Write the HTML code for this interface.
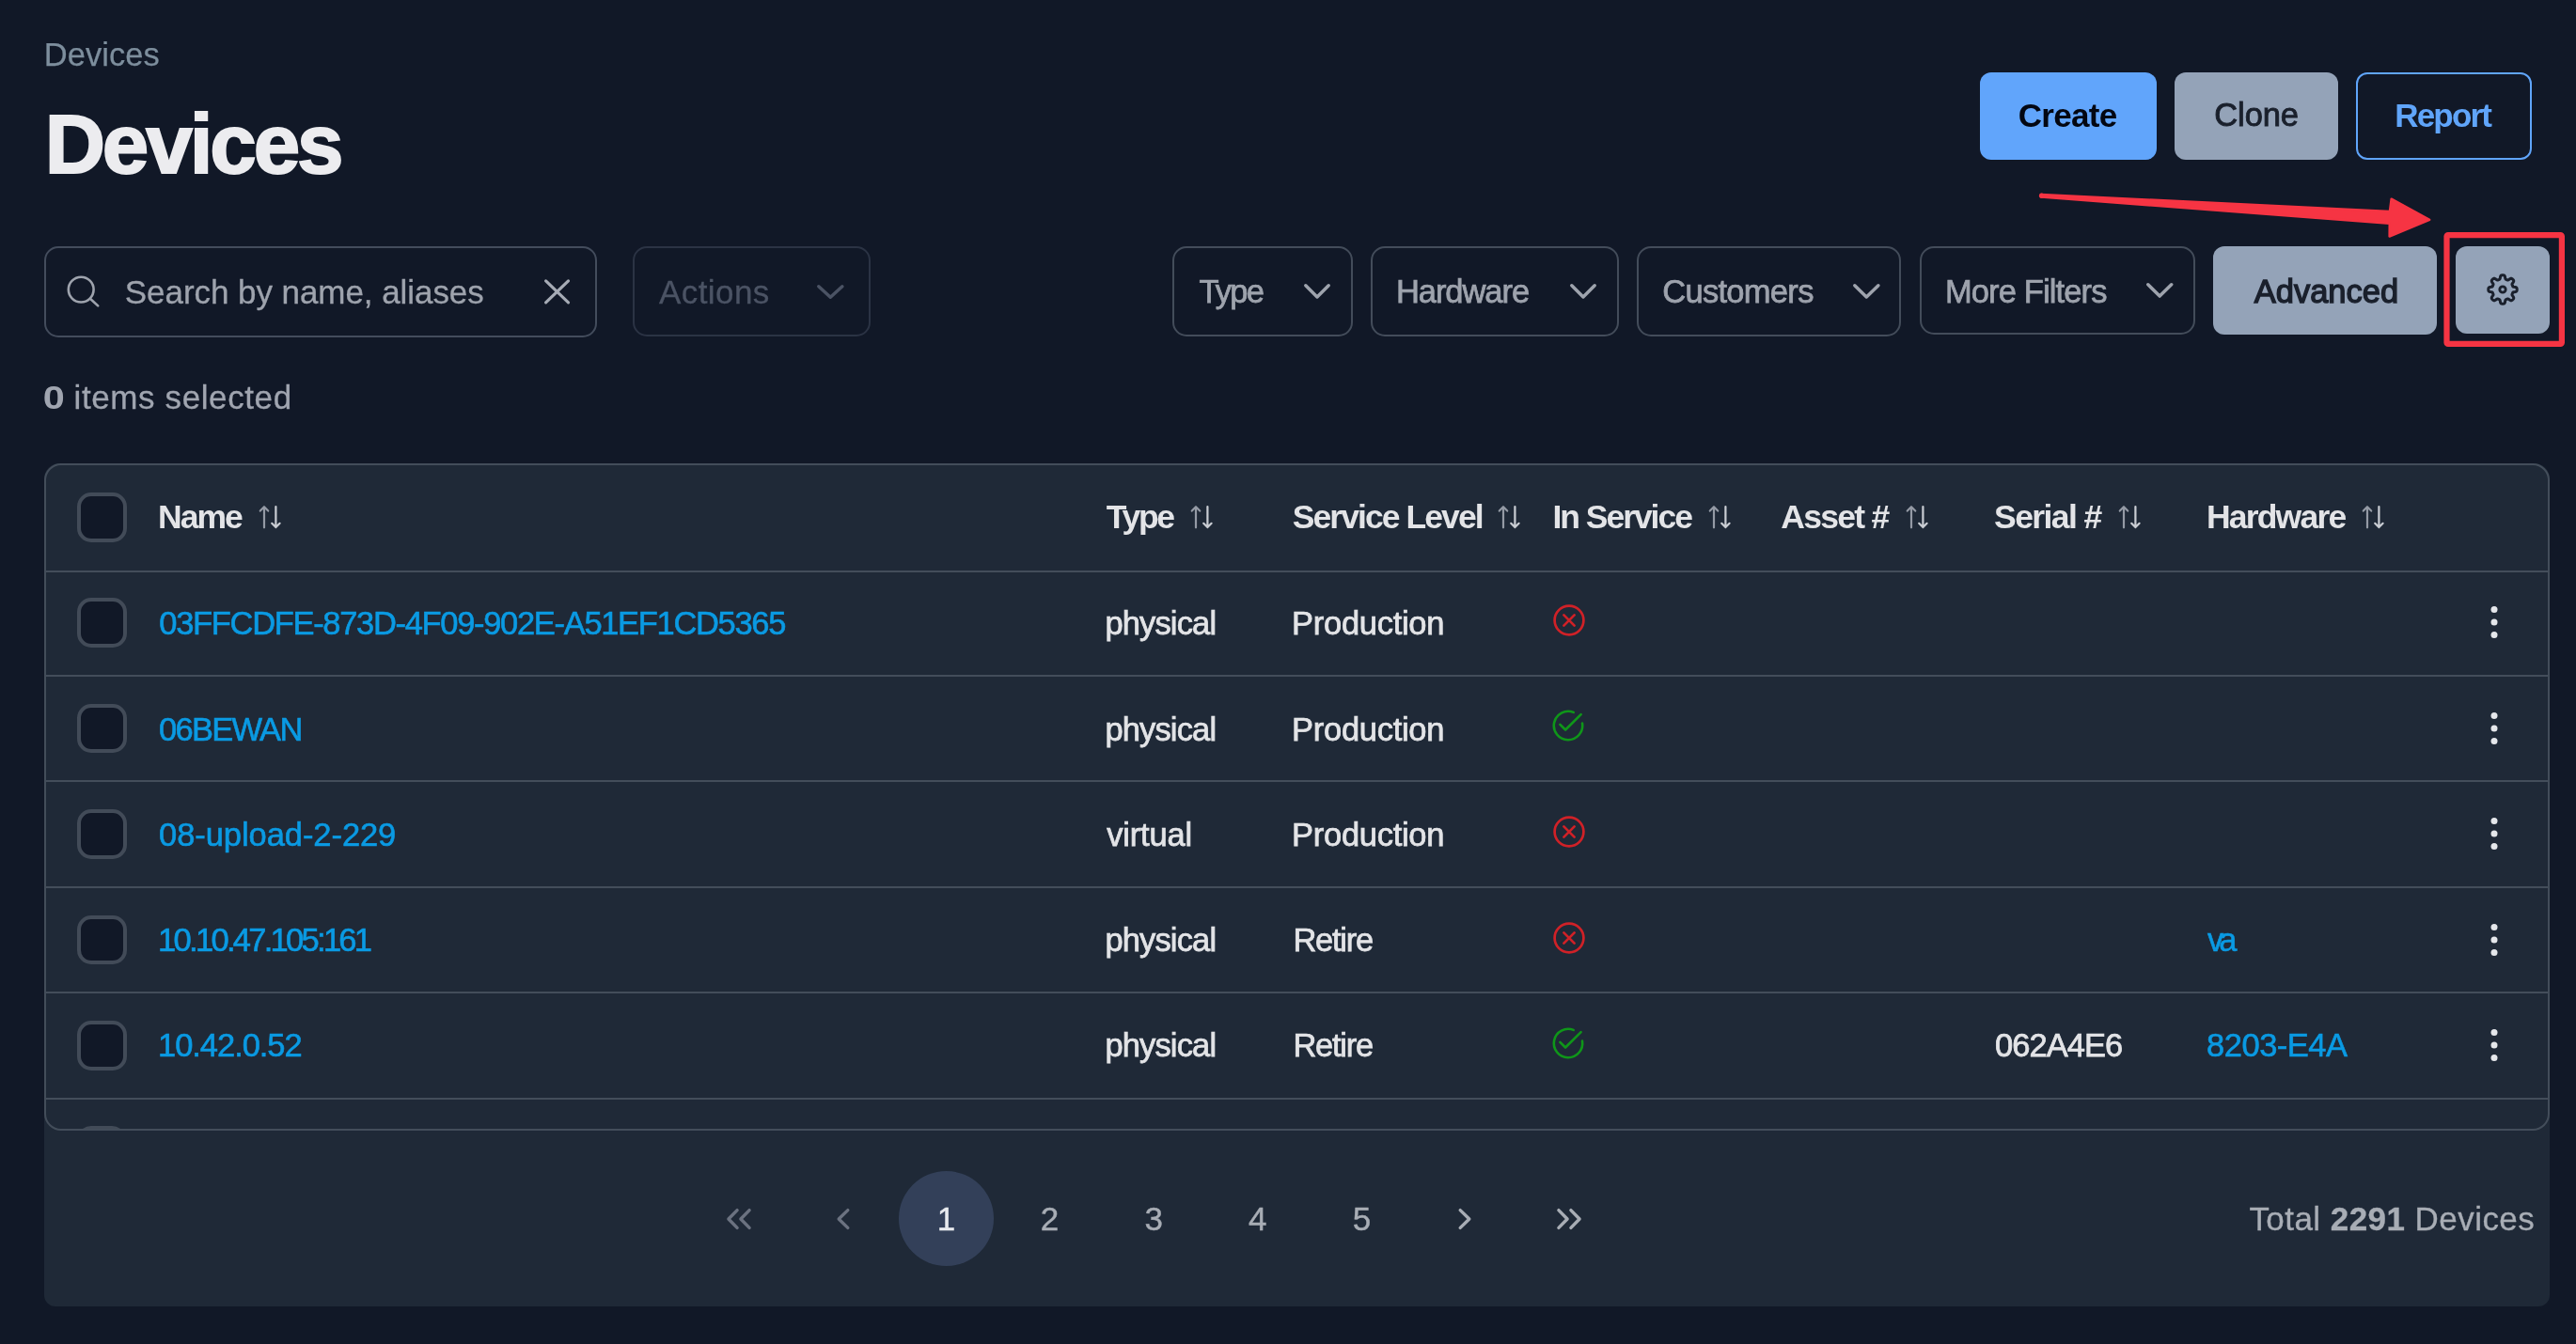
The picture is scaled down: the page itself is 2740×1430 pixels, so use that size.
<!DOCTYPE html>
<html lang="en"><head><meta charset="utf-8"><title>Devices</title>
<style>
html,body{margin:0;padding:0;}
body{width:2740px;height:1430px;overflow:hidden;background:#111827;position:relative;font-family:"Liberation Sans",Arial,Helvetica,sans-serif;}
.t{position:absolute;white-space:nowrap;line-height:1;margin:0;padding:0;font-weight:normal;}
.b{position:absolute;box-sizing:border-box;margin:0;padding:0;}
svg{overflow:visible;display:block;}
.dd{border:2.4px solid #434c5a;border-radius:15px;}
.btn{border-radius:12px;border:0;}
.sep{background:#434d5a;}
</style></head><body><div id="app" style="position:absolute;left:0;top:0;width:2740px;height:1430px;will-change:transform">

<header>
<nav aria-label="breadcrumb"><span class="t" style="left:46.7px;top:41.2px;font-size:34.5px;letter-spacing:0.07px;color:#7d8e9d;-webkit-text-stroke:0.25px;">Devices</span></nav>
<h1 class="t" style="left:47.7px;top:108.7px;font-size:89px;letter-spacing:-3.10px;color:#ececef;font-weight:bold;-webkit-text-stroke:2.0px;">Devices</h1>
<div class="b btn" style="left:2106.0px;top:77.0px;width:188.0px;height:93.0px;background:#61a5fb;"></div>
<span class="t" style="left:2146.8px;top:105.0px;font-size:35px;letter-spacing:-0.72px;color:#030712;font-weight:bold;">Create</span>
<div class="b btn" style="left:2313.0px;top:77.0px;width:174.0px;height:93.0px;background:#94a3b8;"></div>
<span class="t" style="left:2355.3px;top:105.4px;font-size:34.5px;letter-spacing:-0.11px;color:#1a202c;-webkit-text-stroke:0.9px;">Clone</span>
<div class="b btn" style="left:2506.0px;top:77.0px;width:187.0px;height:93.0px;border:2.4px solid #60a5fa;background:transparent;"></div>
<span class="t" style="left:2547.2px;top:105.0px;font-size:35px;letter-spacing:-1.80px;color:#60a5fa;font-weight:bold;">Report</span>
</header>
<svg class="b" style="left:0;top:0" width="2740" height="400" viewBox="0 0 2740 400"><path d="M2171 206.9 L2541.9 224.9 L2543.6 211.6 L2584.2 233.8 L2541.6 251.6 L2541.7 237.8 L2171 209.6 Z" fill="#f63443" stroke="#f63443" stroke-width="2.4" stroke-linejoin="round"/><circle cx="2171.6" cy="208.2" r="2.7" fill="#f63443"/><rect x="2602.5" y="250.1" width="122.4" height="115.8" rx="1.5" fill="none" stroke="#f63443" stroke-width="6.2" stroke-linejoin="round"/></svg>
<section aria-label="toolbar">
<div class="b dd" style="left:47.0px;top:261.8px;width:588.0px;height:96.9px;border-color:#434c5c;"></div>
<svg class="b" style="left:66px;top:288px" width="46" height="46" viewBox="66 288 46 46" fill="none" stroke="#9ea3ad" stroke-width="2.6" stroke-linecap="round"><circle cx="86.2" cy="308.1" r="13.4"/><path d="M95.9 317.7 L104.2 325.4"/></svg>
<span class="t" style="left:132.8px;top:293.4px;font-size:35px;letter-spacing:-0.06px;color:#9ea3ad;-webkit-text-stroke:0.3px;">Search by name, aliases</span>
<svg class="b" style="left:575px;top:293px" width="36" height="36" viewBox="575 293 36 36" fill="none" stroke="#a6abb5" stroke-width="3.2" stroke-linecap="round"><path d="M580.6 298.9 L604.5 321.8 M604.5 298.9 L580.6 321.8"/></svg>
<div class="b dd" style="left:673.2px;top:261.8px;width:252.5px;height:96.0px;border-color:#2b3344;"></div>
<span class="t" style="left:700.9px;top:292.6px;font-size:35px;letter-spacing:0.45px;color:#4b5364;-webkit-text-stroke:0.3px;">Actions</span>
<svg class="b" style="left:866.2px;top:299.5px" width="34.7" height="21.0" viewBox="-3 -3 34.7 21.0"><path d="M1.8 1.8 L14.3 13.2 L26.9 1.8" fill="none" stroke="#4b5364" stroke-width="3.5" stroke-linecap="round" stroke-linejoin="round"/></svg>
<div class="b dd" style="left:1247.2px;top:261.7px;width:191.4px;height:96.4px;"></div>
<span class="t" style="left:1275.5px;top:292.8px;font-size:34.5px;letter-spacing:-1.82px;color:#9ea3ad;-webkit-text-stroke:0.75px;">Type</span>
<svg class="b" style="left:1383.9px;top:299.0px" width="34.0" height="21.7" viewBox="-3 -3 34.0 21.7"><path d="M1.8 1.8 L14.0 13.9 L26.2 1.8" fill="none" stroke="#9ea3ad" stroke-width="3.5" stroke-linecap="round" stroke-linejoin="round"/></svg>
<div class="b dd" style="left:1458.2px;top:261.7px;width:263.8px;height:96.4px;"></div>
<span class="t" style="left:1484.9px;top:292.8px;font-size:34.5px;letter-spacing:-1.05px;color:#9ea3ad;-webkit-text-stroke:0.75px;">Hardware</span>
<svg class="b" style="left:1667.0px;top:299.0px" width="33.9" height="21.7" viewBox="-3 -3 33.9 21.7"><path d="M1.8 1.8 L14.0 13.9 L26.2 1.8" fill="none" stroke="#9ea3ad" stroke-width="3.5" stroke-linecap="round" stroke-linejoin="round"/></svg>
<div class="b dd" style="left:1741.2px;top:261.7px;width:281.3px;height:96.4px;"></div>
<span class="t" style="left:1768.2px;top:292.8px;font-size:34.5px;letter-spacing:-0.70px;color:#9ea3ad;-webkit-text-stroke:0.75px;">Customers</span>
<svg class="b" style="left:1967.6px;top:299.0px" width="34.6" height="21.7" viewBox="-3 -3 34.6 21.7"><path d="M1.8 1.8 L14.3 13.9 L26.9 1.8" fill="none" stroke="#9ea3ad" stroke-width="3.5" stroke-linecap="round" stroke-linejoin="round"/></svg>
<div class="b dd" style="left:2042.2px;top:261.7px;width:292.8px;height:94.5px;"></div>
<span class="t" style="left:2068.9px;top:292.8px;font-size:34.5px;letter-spacing:-0.87px;color:#9ea3ad;-webkit-text-stroke:0.75px;">More Filters</span>
<svg class="b" style="left:2279.6px;top:298.3px" width="34.4" height="21.8" viewBox="-3 -3 34.4 21.8"><path d="M1.8 1.8 L14.2 14.1 L26.7 1.8" fill="none" stroke="#9ea3ad" stroke-width="3.5" stroke-linecap="round" stroke-linejoin="round"/></svg>
<div class="b btn" style="left:2353.8px;top:261.8px;width:238.5px;height:93.8px;background:#94a3b8;"></div>
<span class="t" style="left:2397.7px;top:292.8px;font-size:34.5px;letter-spacing:0.01px;color:#1a202c;-webkit-text-stroke:1.4px;">Advanced</span>
<div class="b btn" style="left:2611.7px;top:261.8px;width:100.4px;height:93.4px;background:#94a3b8;"></div>
<svg class="b" style="left:2642.0px;top:288.3px" width="40" height="40" viewBox="-20 -20 40 40" fill="none" stroke="#1a202c" stroke-width="3" stroke-linejoin="round"><path d="M0.00 -15.20 L0.40 -15.19 L0.79 -15.16 L1.19 -15.09 L1.57 -14.96 L1.94 -14.71 L2.25 -14.23 L2.49 -13.43 L2.65 -12.46 L2.80 -11.66 L2.99 -11.17 L3.23 -10.89 L3.48 -10.71 L3.75 -10.58 L4.02 -10.46 L4.29 -10.35 L4.56 -10.24 L4.83 -10.13 L5.11 -10.04 L5.42 -9.98 L5.78 -10.01 L6.26 -10.22 L6.94 -10.68 L7.74 -11.26 L8.47 -11.66 L9.03 -11.77 L9.47 -11.69 L9.83 -11.51 L10.16 -11.28 L10.46 -11.02 L10.75 -10.75 L11.02 -10.46 L11.28 -10.16 L11.51 -9.83 L11.69 -9.47 L11.77 -9.03 L11.66 -8.47 L11.26 -7.74 L10.68 -6.94 L10.22 -6.26 L10.01 -5.78 L9.98 -5.42 L10.04 -5.11 L10.13 -4.83 L10.24 -4.56 L10.35 -4.29 L10.46 -4.02 L10.58 -3.75 L10.71 -3.48 L10.89 -3.23 L11.17 -2.99 L11.66 -2.80 L12.46 -2.65 L13.43 -2.49 L14.23 -2.25 L14.71 -1.94 L14.96 -1.57 L15.09 -1.19 L15.16 -0.79 L15.19 -0.40 L15.20 -0.00 L15.19 0.40 L15.16 0.79 L15.09 1.19 L14.96 1.57 L14.71 1.94 L14.23 2.25 L13.43 2.49 L12.46 2.65 L11.66 2.80 L11.17 2.99 L10.89 3.23 L10.71 3.48 L10.58 3.75 L10.46 4.02 L10.35 4.29 L10.24 4.56 L10.13 4.83 L10.04 5.11 L9.98 5.42 L10.01 5.78 L10.22 6.26 L10.68 6.94 L11.26 7.74 L11.66 8.47 L11.77 9.03 L11.69 9.47 L11.51 9.83 L11.28 10.16 L11.02 10.46 L10.75 10.75 L10.46 11.02 L10.16 11.28 L9.83 11.51 L9.47 11.69 L9.03 11.77 L8.47 11.66 L7.74 11.26 L6.94 10.68 L6.26 10.22 L5.78 10.01 L5.42 9.98 L5.11 10.04 L4.83 10.13 L4.56 10.24 L4.29 10.35 L4.02 10.46 L3.75 10.58 L3.48 10.71 L3.23 10.89 L2.99 11.17 L2.80 11.66 L2.65 12.46 L2.49 13.43 L2.25 14.23 L1.94 14.71 L1.57 14.96 L1.19 15.09 L0.79 15.16 L0.40 15.19 L0.00 15.20 L-0.40 15.19 L-0.79 15.16 L-1.19 15.09 L-1.57 14.96 L-1.94 14.71 L-2.25 14.23 L-2.49 13.43 L-2.65 12.46 L-2.80 11.66 L-2.99 11.17 L-3.23 10.89 L-3.48 10.71 L-3.75 10.58 L-4.02 10.46 L-4.29 10.35 L-4.56 10.24 L-4.83 10.13 L-5.11 10.04 L-5.42 9.98 L-5.78 10.01 L-6.26 10.22 L-6.94 10.68 L-7.74 11.26 L-8.47 11.66 L-9.03 11.77 L-9.47 11.69 L-9.83 11.51 L-10.16 11.28 L-10.46 11.02 L-10.75 10.75 L-11.02 10.46 L-11.28 10.16 L-11.51 9.83 L-11.69 9.47 L-11.77 9.03 L-11.66 8.47 L-11.26 7.74 L-10.68 6.94 L-10.22 6.26 L-10.01 5.78 L-9.98 5.42 L-10.04 5.11 L-10.13 4.83 L-10.24 4.56 L-10.35 4.29 L-10.46 4.02 L-10.58 3.75 L-10.71 3.48 L-10.89 3.23 L-11.17 2.99 L-11.66 2.80 L-12.46 2.65 L-13.43 2.49 L-14.23 2.25 L-14.71 1.94 L-14.96 1.57 L-15.09 1.19 L-15.16 0.79 L-15.19 0.40 L-15.20 0.00 L-15.19 -0.40 L-15.16 -0.79 L-15.09 -1.19 L-14.96 -1.57 L-14.71 -1.94 L-14.23 -2.25 L-13.43 -2.49 L-12.46 -2.65 L-11.66 -2.80 L-11.17 -2.99 L-10.89 -3.23 L-10.71 -3.48 L-10.58 -3.75 L-10.46 -4.02 L-10.35 -4.29 L-10.24 -4.56 L-10.13 -4.83 L-10.04 -5.11 L-9.98 -5.42 L-10.01 -5.78 L-10.22 -6.26 L-10.68 -6.94 L-11.26 -7.74 L-11.66 -8.47 L-11.77 -9.03 L-11.69 -9.47 L-11.51 -9.83 L-11.28 -10.16 L-11.02 -10.46 L-10.75 -10.75 L-10.46 -11.02 L-10.16 -11.28 L-9.83 -11.51 L-9.47 -11.69 L-9.03 -11.77 L-8.47 -11.66 L-7.74 -11.26 L-6.94 -10.68 L-6.26 -10.22 L-5.78 -10.01 L-5.42 -9.98 L-5.11 -10.04 L-4.83 -10.13 L-4.56 -10.24 L-4.29 -10.35 L-4.02 -10.46 L-3.75 -10.58 L-3.48 -10.71 L-3.23 -10.89 L-2.99 -11.17 L-2.80 -11.66 L-2.65 -12.46 L-2.49 -13.43 L-2.25 -14.23 L-1.94 -14.71 L-1.57 -14.96 L-1.19 -15.09 L-0.79 -15.16 L-0.40 -15.19 L-0.00 -15.20 Z"/><circle r="3.2" stroke-width="2.8"/></svg>
</section>
<p style="margin:0"><b class="t" style="left:46.4px;top:404.7px;font-size:35px;letter-spacing:0.00px;color:#a0a5b0;font-weight:bold;transform:scaleX(1.183);transform-origin:1.0px 50%;">0</b><span class="t" style="left:78.6px;top:404.7px;font-size:35px;letter-spacing:0.60px;color:#a0a5b0;-webkit-text-stroke:0.3px;">items selected</span></p>
<main>
<div class="b" style="left:47.0px;top:493.0px;width:2665.0px;height:896.5px;background:#1f2937;border-radius:16px 16px 12px 12px;"></div>
<div class="b" style="left:47.0px;top:493.2px;width:2665.0px;height:709.8px;border:2px solid #434d5a;border-radius:18px;overflow:hidden;"><div class="b cb" style="left:32.8px;top:702.4px;width:52.7px;height:52.8px;border:4px solid #424b58;border-radius:15px;background:#111827"></div></div>
<div class="b cb" style="left:82.2px;top:524.1px;width:52.7px;height:52.8px;box-sizing:border-box;border:4px solid #424b58;border-radius:15px;background:#111827;"></div>
<span class="t th" style="left:168.0px;top:532.7px;font-size:35.5px;letter-spacing:-1.98px;color:#e3e4e7;font-weight:bold;">Name</span>
<svg class="b" style="left:273.6px;top:536px" width="28" height="29" viewBox="273.6 536 28 29" fill="none" stroke-width="2.2" stroke-linecap="round" stroke-linejoin="round"><path d="M280.6 561.3 V539.3 M276.4 543.6 L280.6 539.3 L284.8 543.6" stroke="#949aa5"/><path d="M293.0 539.1 V561.1 M288.8 556.8 L293.0 561.1 L297.2 556.8" stroke="#c9cdd3"/></svg>
<span class="t th" style="left:1176.8px;top:532.7px;font-size:35.5px;letter-spacing:-2.33px;color:#e3e4e7;font-weight:bold;">Type</span>
<svg class="b" style="left:1264.9px;top:536px" width="28" height="29" viewBox="1264.9 536 28 29" fill="none" stroke-width="2.2" stroke-linecap="round" stroke-linejoin="round"><path d="M1271.9 561.3 V539.3 M1267.7 543.6 L1271.9 539.3 L1276.1 543.6" stroke="#949aa5"/><path d="M1284.3 539.1 V561.1 M1280.1 556.8 L1284.3 561.1 L1288.5 556.8" stroke="#c9cdd3"/></svg>
<span class="t th" style="left:1374.7px;top:532.7px;font-size:35.5px;letter-spacing:-1.92px;color:#e3e4e7;font-weight:bold;">Service Level</span>
<svg class="b" style="left:1592.4px;top:536px" width="28" height="29" viewBox="1592.4 536 28 29" fill="none" stroke-width="2.2" stroke-linecap="round" stroke-linejoin="round"><path d="M1599.4 561.3 V539.3 M1595.2 543.6 L1599.4 539.3 L1603.6 543.6" stroke="#949aa5"/><path d="M1611.8 539.1 V561.1 M1607.6 556.8 L1611.8 561.1 L1616.0 556.8" stroke="#c9cdd3"/></svg>
<span class="t th" style="left:1651.5px;top:532.7px;font-size:35.5px;letter-spacing:-2.04px;color:#e3e4e7;font-weight:bold;">In Service</span>
<svg class="b" style="left:1815.7px;top:536px" width="28" height="29" viewBox="1815.7 536 28 29" fill="none" stroke-width="2.2" stroke-linecap="round" stroke-linejoin="round"><path d="M1822.7 561.3 V539.3 M1818.5 543.6 L1822.7 539.3 L1826.9 543.6" stroke="#949aa5"/><path d="M1835.1 539.1 V561.1 M1830.9 556.8 L1835.1 561.1 L1839.3 556.8" stroke="#c9cdd3"/></svg>
<span class="t th" style="left:1894.3px;top:532.7px;font-size:35.5px;letter-spacing:-1.74px;color:#e3e4e7;font-weight:bold;">Asset #</span>
<svg class="b" style="left:2026.0px;top:536px" width="28" height="29" viewBox="2026.0 536 28 29" fill="none" stroke-width="2.2" stroke-linecap="round" stroke-linejoin="round"><path d="M2033.0 561.3 V539.3 M2028.8 543.6 L2033.0 539.3 L2037.2 543.6" stroke="#949aa5"/><path d="M2045.4 539.1 V561.1 M2041.2 556.8 L2045.4 561.1 L2049.6 556.8" stroke="#c9cdd3"/></svg>
<span class="t th" style="left:2121.1px;top:532.7px;font-size:35.5px;letter-spacing:-1.61px;color:#e3e4e7;font-weight:bold;">Serial #</span>
<svg class="b" style="left:2252.0px;top:536px" width="28" height="29" viewBox="2252.0 536 28 29" fill="none" stroke-width="2.2" stroke-linecap="round" stroke-linejoin="round"><path d="M2259.0 561.3 V539.3 M2254.8 543.6 L2259.0 539.3 L2263.2 543.6" stroke="#949aa5"/><path d="M2271.4 539.1 V561.1 M2267.2 556.8 L2271.4 561.1 L2275.6 556.8" stroke="#c9cdd3"/></svg>
<span class="t th" style="left:2346.9px;top:532.7px;font-size:35.5px;letter-spacing:-1.79px;color:#e3e4e7;font-weight:bold;">Hardware</span>
<svg class="b" style="left:2511.0px;top:536px" width="28" height="29" viewBox="2511.0 536 28 29" fill="none" stroke-width="2.2" stroke-linecap="round" stroke-linejoin="round"><path d="M2518.0 561.3 V539.3 M2513.8 543.6 L2518.0 539.3 L2522.2 543.6" stroke="#949aa5"/><path d="M2530.4 539.1 V561.1 M2526.2 556.8 L2530.4 561.1 L2534.6 556.8" stroke="#c9cdd3"/></svg>
<div class="b sep" style="left:49.0px;top:607.0px;width:2661.0px;height:2.0px;"></div>
<div class="b sep" style="left:49.0px;top:718.0px;width:2661.0px;height:2.0px;"></div>
<div class="b sep" style="left:49.0px;top:830.0px;width:2661.0px;height:2.0px;"></div>
<div class="b sep" style="left:49.0px;top:943.0px;width:2661.0px;height:2.0px;"></div>
<div class="b sep" style="left:49.0px;top:1055.0px;width:2661.0px;height:2.0px;"></div>
<div class="b sep" style="left:49.0px;top:1168.0px;width:2661.0px;height:2.0px;"></div>
<div class="b cb" style="left:82.2px;top:636.1px;width:52.7px;height:52.8px;box-sizing:border-box;border:4px solid #424b58;border-radius:15px;background:#111827;"></div>
<a class="t" style="left:169.3px;top:646.4px;font-size:34.5px;letter-spacing:-1.32px;color:#0a9ae3;-webkit-text-stroke:0.6px;">03FFCDFE-873D-4F09-902E-A51EF1CD5365</a>
<span class="t" style="left:1175.4px;top:646.4px;font-size:34.5px;letter-spacing:-0.85px;color:#e3e4e7;-webkit-text-stroke:0.75px;">physical</span>
<span class="t" style="left:1374.1px;top:646.4px;font-size:34.5px;letter-spacing:-0.29px;color:#e3e4e7;-webkit-text-stroke:0.75px;">Production</span>
<svg class="b" style="left:1648.6px;top:640.1px" width="40" height="40" viewBox="-20 -20 40 40" fill="none" stroke="#d02127" stroke-width="2.7" stroke-linecap="round"><circle r="15.4"/><path d="M-5.6 -5.6 L5.6 5.6 M5.6 -5.6 L-5.6 5.6"/></svg>
<svg class="b" style="left:2646.5px;top:642.1px" width="12" height="40" viewBox="-6 -20 12 40" fill="#e5e7eb"><circle cy="-13.5" r="3.5"/><circle cy="0" r="3.5"/><circle cy="13.5" r="3.5"/></svg>
<div class="b cb" style="left:82.2px;top:748.6px;width:52.7px;height:52.8px;box-sizing:border-box;border:4px solid #424b58;border-radius:15px;background:#111827;"></div>
<a class="t" style="left:169.1px;top:758.5px;font-size:34.5px;letter-spacing:-1.73px;color:#0a9ae3;-webkit-text-stroke:0.6px;">06BEWAN</a>
<span class="t" style="left:1175.4px;top:758.5px;font-size:34.5px;letter-spacing:-0.85px;color:#e3e4e7;-webkit-text-stroke:0.75px;">physical</span>
<span class="t" style="left:1374.1px;top:758.5px;font-size:34.5px;letter-spacing:-0.29px;color:#e3e4e7;-webkit-text-stroke:0.75px;">Production</span>
<svg class="b" style="left:1648.3px;top:752.0px" width="40" height="40" viewBox="-20 -20 40 40" fill="none" stroke="#0f9619" stroke-width="2.6" stroke-linecap="round" stroke-linejoin="round"><path d="M5.69 -14.09 A15.2 15.2 0 1 0 15.01 -2.38"/><path d="M-8.6 -1.2 L-2.9 4.5 L13.6 -11.8"/></svg>
<svg class="b" style="left:2646.5px;top:754.6px" width="12" height="40" viewBox="-6 -20 12 40" fill="#e5e7eb"><circle cy="-13.5" r="3.5"/><circle cy="0" r="3.5"/><circle cy="13.5" r="3.5"/></svg>
<div class="b cb" style="left:82.2px;top:861.1px;width:52.7px;height:52.8px;box-sizing:border-box;border:4px solid #424b58;border-radius:15px;background:#111827;"></div>
<a class="t" style="left:169.1px;top:870.6px;font-size:34.5px;letter-spacing:-0.07px;color:#0a9ae3;-webkit-text-stroke:0.6px;">08-upload-2-229</a>
<span class="t" style="left:1177.2px;top:870.6px;font-size:34.5px;letter-spacing:-0.19px;color:#e3e4e7;-webkit-text-stroke:0.75px;">virtual</span>
<span class="t" style="left:1374.1px;top:870.6px;font-size:34.5px;letter-spacing:-0.29px;color:#e3e4e7;-webkit-text-stroke:0.75px;">Production</span>
<svg class="b" style="left:1648.6px;top:865.1px" width="40" height="40" viewBox="-20 -20 40 40" fill="none" stroke="#d02127" stroke-width="2.7" stroke-linecap="round"><circle r="15.4"/><path d="M-5.6 -5.6 L5.6 5.6 M5.6 -5.6 L-5.6 5.6"/></svg>
<svg class="b" style="left:2646.5px;top:867.1px" width="12" height="40" viewBox="-6 -20 12 40" fill="#e5e7eb"><circle cy="-13.5" r="3.5"/><circle cy="0" r="3.5"/><circle cy="13.5" r="3.5"/></svg>
<div class="b cb" style="left:82.2px;top:973.6px;width:52.7px;height:52.8px;box-sizing:border-box;border:4px solid #424b58;border-radius:15px;background:#111827;"></div>
<a class="t" style="left:168.1px;top:982.7px;font-size:34.5px;letter-spacing:-2.71px;color:#0a9ae3;-webkit-text-stroke:0.6px;">10.10.47.105:161</a>
<span class="t" style="left:1175.4px;top:982.7px;font-size:34.5px;letter-spacing:-0.85px;color:#e3e4e7;-webkit-text-stroke:0.75px;">physical</span>
<span class="t" style="left:1375.4px;top:982.7px;font-size:34.5px;letter-spacing:-1.26px;color:#e3e4e7;-webkit-text-stroke:0.75px;">Retire</span>
<svg class="b" style="left:1648.6px;top:977.6px" width="40" height="40" viewBox="-20 -20 40 40" fill="none" stroke="#d02127" stroke-width="2.7" stroke-linecap="round"><circle r="15.4"/><path d="M-5.6 -5.6 L5.6 5.6 M5.6 -5.6 L-5.6 5.6"/></svg>
<a class="t" style="left:2348.1px;top:982.7px;font-size:34.5px;letter-spacing:-5.05px;color:#0a9ae3;-webkit-text-stroke:0.6px;">va</a>
<svg class="b" style="left:2646.5px;top:979.6px" width="12" height="40" viewBox="-6 -20 12 40" fill="#e5e7eb"><circle cy="-13.5" r="3.5"/><circle cy="0" r="3.5"/><circle cy="13.5" r="3.5"/></svg>
<div class="b cb" style="left:82.2px;top:1086.1px;width:52.7px;height:52.8px;box-sizing:border-box;border:4px solid #424b58;border-radius:15px;background:#111827;"></div>
<a class="t" style="left:168.1px;top:1094.8px;font-size:34.5px;letter-spacing:-1.06px;color:#0a9ae3;-webkit-text-stroke:0.6px;">10.42.0.52</a>
<span class="t" style="left:1175.4px;top:1094.8px;font-size:34.5px;letter-spacing:-0.85px;color:#e3e4e7;-webkit-text-stroke:0.75px;">physical</span>
<span class="t" style="left:1375.4px;top:1094.8px;font-size:34.5px;letter-spacing:-1.26px;color:#e3e4e7;-webkit-text-stroke:0.75px;">Retire</span>
<svg class="b" style="left:1648.3px;top:1089.5px" width="40" height="40" viewBox="-20 -20 40 40" fill="none" stroke="#0f9619" stroke-width="2.6" stroke-linecap="round" stroke-linejoin="round"><path d="M5.69 -14.09 A15.2 15.2 0 1 0 15.01 -2.38"/><path d="M-8.6 -1.2 L-2.9 4.5 L13.6 -11.8"/></svg>
<span class="t" style="left:2121.9px;top:1094.8px;font-size:34.5px;letter-spacing:-0.94px;color:#e3e4e7;-webkit-text-stroke:0.75px;">062A4E6</span>
<a class="t" style="left:2347.1px;top:1094.8px;font-size:34.5px;letter-spacing:-0.51px;color:#0a9ae3;-webkit-text-stroke:0.6px;">8203-E4A</a>
<svg class="b" style="left:2646.5px;top:1092.1px" width="12" height="40" viewBox="-6 -20 12 40" fill="#e5e7eb"><circle cy="-13.5" r="3.5"/><circle cy="0" r="3.5"/><circle cy="13.5" r="3.5"/></svg>
<nav aria-label="pagination">
<svg class="b" style="left:765.8px;top:1281.0px" width="40" height="32" viewBox="-20 -16 40 32" fill="none" stroke="#6b7280" stroke-width="3.4" stroke-linecap="round" stroke-linejoin="round"><path d="M-1.9 -9.4 L-11.1 0 L-1.9 9.4"/><path d="M11.1 -9.4 L1.9 0 L11.1 9.4"/></svg>
<svg class="b" style="left:877.2px;top:1281.0px" width="40" height="32" viewBox="-20 -16 40 32" fill="none" stroke="#6b7280" stroke-width="3.4" stroke-linecap="round" stroke-linejoin="round"><path d="M4.8 -9.4 L-4.8 0 L4.8 9.4"/></svg>
<div class="b" style="left:955.8px;top:1246.0px;width:101.4px;height:101.0px;background:#334059;border-radius:50%;"></div>
<span class="t" style="left:976.5px;width:60px;text-align:center;top:1279.4px;font-size:35px;color:#e8eaee;-webkit-text-stroke:0.4px">1</span>
<span class="t" style="left:1086.6px;width:60px;text-align:center;top:1279.4px;font-size:35px;color:#a8adb5;-webkit-text-stroke:0.4px">2</span>
<span class="t" style="left:1197.2px;width:60px;text-align:center;top:1279.4px;font-size:35px;color:#a8adb5;-webkit-text-stroke:0.4px">3</span>
<span class="t" style="left:1307.8px;width:60px;text-align:center;top:1279.4px;font-size:35px;color:#a8adb5;-webkit-text-stroke:0.4px">4</span>
<span class="t" style="left:1418.5px;width:60px;text-align:center;top:1279.4px;font-size:35px;color:#a8adb5;-webkit-text-stroke:0.4px">5</span>
<svg class="b" style="left:1538.3px;top:1281.0px" width="40" height="32" viewBox="-20 -16 40 32" fill="none" stroke="#a8adb5" stroke-width="3.4" stroke-linecap="round" stroke-linejoin="round"><path d="M-4.8 -9.4 L4.8 0 L-4.8 9.4"/></svg>
<svg class="b" style="left:1648.6px;top:1281.0px" width="40" height="32" viewBox="-20 -16 40 32" fill="none" stroke="#a8adb5" stroke-width="3.4" stroke-linecap="round" stroke-linejoin="round"><path d="M-11.1 -9.4 L-1.9 0 L-11.1 9.4"/><path d="M1.9 -9.4 L11.1 0 L1.9 9.4"/></svg>
<span class="t" style="left:2392.4px;top:1279.3px;font-size:35px;color:#a8adb5;letter-spacing:0.45px;-webkit-text-stroke:0.3px">Total <b>2291</b> Devices</span>
</nav>
</main>
</div></body></html>
